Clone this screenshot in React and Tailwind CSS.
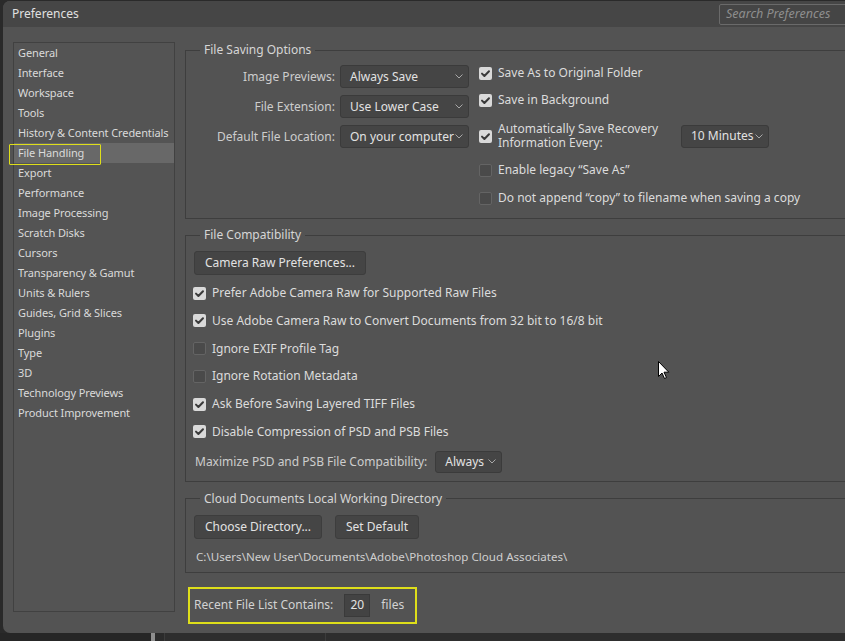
import React from "react";

function Check({ on }) {
  return on ? (
    <span className="w-[13px] h-[13px] shrink-0 rounded-[2px] bg-[#d9d9d9] flex items-center justify-center">
      <svg width="13" height="13" viewBox="0 0 13 13">
        <path d="M3 6.6 L5.4 9 L10 4.2" fill="none" stroke="#3a3a3a" strokeWidth="2" strokeLinecap="round" strokeLinejoin="round" />
      </svg>
    </span>
  ) : (
    <span className="w-[13px] h-[13px] shrink-0 rounded-[2px] bg-[#4a4a4a] border border-[#646464]" />
  );
}

function Chevron() {
  return (
    <svg width="8" height="5" viewBox="0 0 8 5" className="shrink-0">
      <path d="M0.5 0.5 L4 4 L7.5 0.5" fill="none" stroke="#a8a8a8" strokeWidth="1" />
    </svg>
  );
}

function Dropdown({ value, w, h = "h-[23px]" }) {
  return (
    <div className={`${w} ${h} shrink-0 flex items-center justify-between pl-[9px] pr-[5px] bg-[#454545] border border-[#3b3b3b] rounded-[3px] text-[#e2e2e2] text-[12px] whitespace-nowrap overflow-hidden`}>
      <span>{value}</span>
      <Chevron />
    </div>
  );
}

function Button({ children, w }) {
  return (
    <div className={`${w} h-[24px] shrink-0 flex items-center justify-center bg-[#454545] border border-[#3d3d3d] rounded-[3px] text-[#e2e2e2] text-[12px] whitespace-nowrap`}>
      {children}
    </div>
  );
}

function CheckRow({ on, children, className = "" }) {
  return (
    <div className={`h-[20px] flex items-center gap-[6px] text-[#dcdcdc] whitespace-nowrap ${className}`}>
      <Check on={on} />
      <span>{children}</span>
    </div>
  );
}

function Legend({ children }) {
  return (
    <legend className="ml-[14px] px-[4px] leading-[16px] text-[#d6d6d6]">{children}</legend>
  );
}

const items = [
  "General",
  "Interface",
  "Workspace",
  "Tools",
  "History & Content Credentials",
  "File Handling",
  "Export",
  "Performance",
  "Image Processing",
  "Scratch Disks",
  "Cursors",
  "Transparency & Gamut",
  "Units & Rulers",
  "Guides, Grid & Slices",
  "Plugins",
  "Type",
  "3D",
  "Technology Previews",
  "Product Improvement",
];

export default function App() {
  return (
    <div className="w-[845px] h-[641px] overflow-hidden bg-[#2a2a2a] relative font-['Noto_Sans',sans-serif] text-[12px] leading-[16px] flex flex-col">
      <div className="ml-[3px] mt-[1px] w-[860px] h-[632px] shrink-0 rounded-l-[7px] bg-[#535353] flex flex-col overflow-hidden">
        {/* Title bar */}
        <div className="h-[26px] shrink-0 bg-[#464646] flex items-center pl-[9px]">
          <span className="text-[12px] text-[#e0e0e0]">Preferences</span>
          <div className="ml-auto mr-[4px] w-[140px] h-[21px] border border-[#6a6a6a] bg-[#454545] rounded-[2px] pl-[6px] flex items-center italic text-[#8e8e8e] text-[12.5px]">
            Search Preferences
          </div>
        </div>

        {/* Body */}
        <div className="flex-1 flex pt-[15px] pl-[10px]">
          {/* Left list */}
          <div className="relative w-[162px] h-[570px] shrink-0 border border-[#414141] bg-[#545454]">
            {items.map((it) => (
              <div
                key={it}
                className={`h-[20px] flex items-center pl-[4px] text-[11px] tracking-[-0.1px] text-[#dadada] whitespace-nowrap ${it === "File Handling" ? "bg-[#686868]" : ""}`}
              >
                {it}
              </div>
            ))}
            <div className="absolute left-[-5px] top-[101px] w-[92px] h-[21px] border-[1.5px] border-[#dede1a] rounded-[1px]" />
          </div>

          {/* Right content */}
          <div className="ml-[10px] flex flex-col">
            {/* File Saving Options */}
            <fieldset className="w-[700px] border border-[#3e3e3e] pb-[10px]">
              <Legend>File Saving Options</Legend>
              <div className="flex">
                <div className="flex flex-col gap-[7px] mt-[7px]">
                  {[
                    ["Image Previews:", "Always Save"],
                    ["File Extension:", "Use Lower Case"],
                    ["Default File Location:", "On your computer"],
                  ].map(([l, v]) => (
                    <div key={l} className="flex items-center gap-[5px]">
                      <span className="w-[149px] text-right text-[#cdcdcd] whitespace-nowrap">{l}</span>
                      <Dropdown value={v} w="w-[129px]" />
                    </div>
                  ))}
                </div>
                <div className="ml-[10px] flex flex-col mt-[5px]">
                  <CheckRow on>Save As to Original Folder</CheckRow>
                  <CheckRow on className="mt-[7px]">Save in Background</CheckRow>
                  <div className="mt-[12px] h-[28px] flex items-center gap-[6px] text-[#dcdcdc] whitespace-nowrap">
                    <Check on />
                    <div className="w-[177px] flex flex-col">
                      <span className="leading-[14px]">Automatically Save Recovery</span>
                      <span className="leading-[14px]">Information Every:</span>
                    </div>
                    <Dropdown value="10 Minutes" w="w-[88px]" h="h-[23px]" />
                  </div>
                  <CheckRow className="mt-[10px]">Enable legacy “Save As”</CheckRow>
                  <CheckRow className="mt-[8px]">Do not append “copy” to filename when saving a copy</CheckRow>
                </div>
              </div>
            </fieldset>

            {/* File Compatibility */}
            <fieldset className="mt-[8px] w-[700px] border border-[#3e3e3e] pb-[8px]">
              <Legend>File Compatibility</Legend>
              <div className="pl-[8px] mt-[8px]">
                <Button w="w-[172px]">Camera Raw Preferences...</Button>
              </div>
              <div className="pl-[7px] mt-[8px] flex flex-col gap-[7.8px]">
                <CheckRow on>Prefer Adobe Camera Raw for Supported Raw Files</CheckRow>
                <CheckRow on>Use Adobe Camera Raw to Convert Documents from 32 bit to 16/8 bit</CheckRow>
                <CheckRow>Ignore EXIF Profile Tag</CheckRow>
                <CheckRow>Ignore Rotation Metadata</CheckRow>
                <CheckRow on>Ask Before Saving Layered TIFF Files</CheckRow>
                <CheckRow on>Disable Compression of PSD and PSB Files</CheckRow>
              </div>
              <div className="pl-[9px] mt-[9px] flex items-center gap-[8px]">
                <span className="text-[#cdcdcd] whitespace-nowrap">Maximize PSD and PSB File Compatibility:</span>
                <Dropdown value="Always" w="w-[67px]" h="h-[22px]" />
              </div>
            </fieldset>

            {/* Cloud Documents */}
            <fieldset className="mt-[9px] w-[700px] border border-[#3e3e3e] pb-[7px]">
              <Legend>Cloud Documents Local Working Directory</Legend>
              <div className="pl-[8px] mt-[8px] flex gap-[13px]">
                <Button w="w-[128px]">Choose Directory...</Button>
                <Button w="w-[84px]">Set Default</Button>
              </div>
              <div className="pl-[10px] mt-[10px] text-[11.6px] text-[#cfcfcf] whitespace-nowrap">
                C:\Users\New User\Documents\Adobe\Photoshop Cloud Associates\
              </div>
            </fieldset>

            {/* Recent file list */}
            <div className="mt-[14px] ml-[3px] w-[229px] h-[37px] border-2 border-[#dede1a] flex items-center pl-[4px] text-[#d2d2d2] whitespace-nowrap">
              <span>Recent File List Contains:</span>
              <div className="ml-[11px] w-[26px] h-[23px] bg-[#434343] border border-[#3a3a3a] flex items-center justify-center text-[#e4e4e4]">
                20
              </div>
              <span className="ml-[11px]">files</span>
            </div>
          </div>
        </div>
      </div>

      {/* Background below dialog */}
      <div className="flex-1 flex">
        <div className="w-[151px] bg-[#262626]" />
        <div className="w-[4px] bg-[#8e8e8e]" />
        <div className="w-[9px] bg-[#2b2b2b]" />
        <div className="w-[1px] bg-[#3c3c3c]" />
        <div className="w-[160px] bg-[#2e2e2e]" />
        <div className="w-[1px] bg-[#3c3c3c]" />
        <div className="flex-1 bg-[#2e2e2e]" />
      </div>

      {/* Mouse cursor */}
      <svg className="absolute left-[658px] top-[361px]" width="12" height="19" viewBox="0 0 12 19">
        <path d="M0.5 0.5 L0.5 15.5 L4 12 L6.5 17.5 L8.5 16.6 L6 11.2 L10.8 11.2 Z" fill="#ffffff" stroke="#000000" strokeWidth="1" strokeLinejoin="round" />
      </svg>
    </div>
  );
}
